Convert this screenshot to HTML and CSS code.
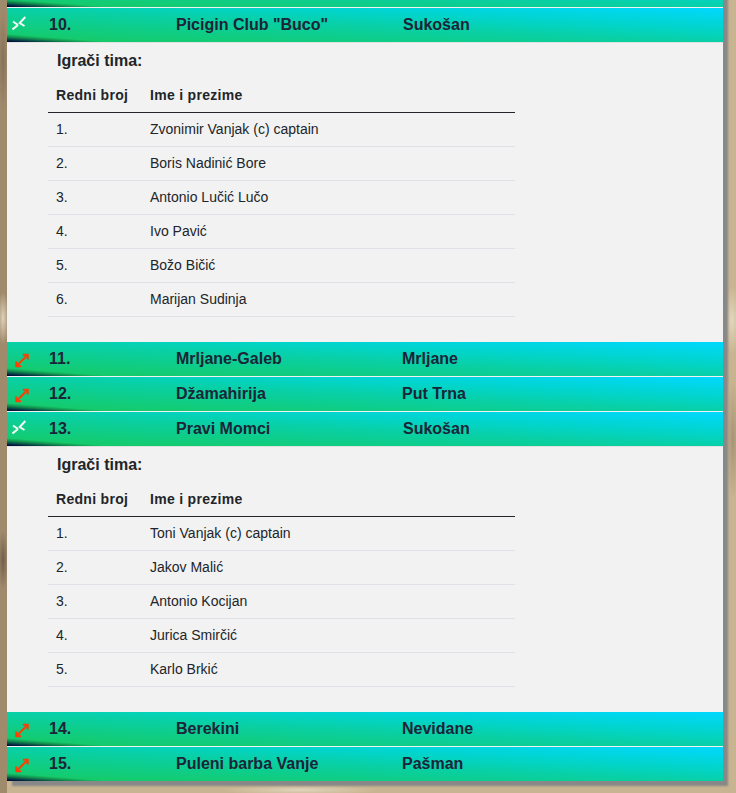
FILE: index.html
```html
<!DOCTYPE html>
<html lang="en">
<head>
    <meta charset="UTF-8">
    <meta name="viewport" content="width=device-width, initial-scale=1.0">
    <title>Timovi</title>
    <link rel="stylesheet" href="styles.css">
</head>
<body>
    <main class="teams">
        <div class="team-row">
            <span class="team-icon"></span>
        </div>

        <div class="team-row open">
            <span class="team-icon">
                <svg width="18" height="18" viewBox="0 0 18 18"><path d="M0.500 13.500 6 9M1 5.500 6 9M13.300 1 7.700 7 12.500 10" /></svg>
            </span>
            <span class="team-num">10.</span>
            <span class="team-name">Picigin Club "Buco"</span>
            <span class="team-place">Sukošan</span>
        </div>
        <section class="team-panel">
            <h3>Igrači tima:</h3>
            <table class="players">
                <thead>
                    <tr><th>Redni broj</th><th>Ime i prezime</th></tr>
                </thead>
                <tbody>
                    <tr><td>1.</td><td>Zvonimir Vanjak (c) captain</td></tr>
                    <tr><td>2.</td><td>Boris Nadinić Bore</td></tr>
                    <tr><td>3.</td><td>Antonio Lučić Lučo</td></tr>
                    <tr><td>4.</td><td>Ivo Pavić</td></tr>
                    <tr><td>5.</td><td>Božo Bičić</td></tr>
                    <tr><td>6.</td><td>Marijan Sudinja</td></tr>
                </tbody>
            </table>
        </section>

        <div class="team-row">
            <span class="team-icon">
                <svg width="18" height="18" viewBox="0 0 18 18"><path d="M4.300 16.300 15.700 4.700M4.300 11.500V16.300H9.100M10.900 4.700H15.700V9.500" /></svg>
            </span>
            <span class="team-num">11.</span>
            <span class="team-name">Mrljane-Galeb</span>
            <span class="team-place">Mrljane</span>
        </div>
        <div class="team-row">
            <span class="team-icon">
                <svg width="18" height="18" viewBox="0 0 18 18"><path d="M4.300 16.300 15.700 4.700M4.300 11.500V16.300H9.100M10.900 4.700H15.700V9.500" /></svg>
            </span>
            <span class="team-num">12.</span>
            <span class="team-name">Džamahirija</span>
            <span class="team-place">Put Trna</span>
        </div>

        <div class="team-row open">
            <span class="team-icon">
                <svg width="18" height="18" viewBox="0 0 18 18"><path d="M0.500 13.500 6 9M1 5.500 6 9M13.300 1 7.700 7 12.500 10" /></svg>
            </span>
            <span class="team-num">13.</span>
            <span class="team-name">Pravi Momci</span>
            <span class="team-place">Sukošan</span>
        </div>
        <section class="team-panel">
            <h3>Igrači tima:</h3>
            <table class="players">
                <thead>
                    <tr><th>Redni broj</th><th>Ime i prezime</th></tr>
                </thead>
                <tbody>
                    <tr><td>1.</td><td>Toni Vanjak (c) captain</td></tr>
                    <tr><td>2.</td><td>Jakov Malić</td></tr>
                    <tr><td>3.</td><td>Antonio Kocijan</td></tr>
                    <tr><td>4.</td><td>Jurica Smirčić</td></tr>
                    <tr><td>5.</td><td>Karlo Brkić</td></tr>
                </tbody>
            </table>
        </section>

        <div class="team-row">
            <span class="team-icon">
                <svg width="18" height="18" viewBox="0 0 18 18"><path d="M4.300 16.300 15.700 4.700M4.300 11.500V16.300H9.100M10.900 4.700H15.700V9.500" /></svg>
            </span>
            <span class="team-num">14.</span>
            <span class="team-name">Berekini</span>
            <span class="team-place">Nevidane</span>
        </div>
        <div class="team-row last">
            <span class="team-icon">
                <svg width="18" height="18" viewBox="0 0 18 18"><path d="M4.300 16.300 15.700 4.700M4.300 11.500V16.300H9.100M10.900 4.700H15.700V9.500" /></svg>
            </span>
            <span class="team-num">15.</span>
            <span class="team-name">Puleni barba Vanje</span>
            <span class="team-place">Pašman</span>
        </div>
    </main>
</body>
</html>
```

FILE: styles.css
```css
html, body {
    height: 793px;
    overflow: hidden;
}
body {
    margin: 0;
    padding: 0 13px 0 7px;
    box-sizing: border-box;
    font-family: "Liberation Sans", Arial, sans-serif;
    color: #212529;
    background-color: #c8b490;
    background-image:
        radial-gradient(ellipse 6px 26px at 3px 318px, #ddd2bc 0, transparent 100%),
        radial-gradient(ellipse 5px 30px at 3px 560px, #6f5f4c 0, transparent 100%),
        radial-gradient(ellipse 5px 50px at 3px 60px, #84715a 0, transparent 100%),
        radial-gradient(ellipse 9px 34px at 732px 320px, #e2d6bf 0, transparent 100%),
        radial-gradient(ellipse 7px 60px at 733px 440px, #a89476 0, transparent 100%),
        radial-gradient(ellipse 80px 5px at 300px 790px, #e0d4bc 0, transparent 100%),
        linear-gradient(90deg, #a08a6c 0 7px, #c8b490 7px);
}
.teams {
    margin-top: -27px;
    box-shadow: 5px 5px 2px #888;
}
.team-row {
    display: grid;
    grid-template-columns: 42px 127px 226px 1fr;
    align-items: center;
    height: 34px;
    border-bottom: 1px solid #f2f2f2;
    background:
        linear-gradient(4.5deg, #00003a 0, #042040 1.5px, #0a5a48 3.5px, #12944f 5.5px, rgba(24, 200, 96, 0) 8px),
        linear-gradient(to top right, #18c860 0%, #12cc78 17%, #08d0a8 50%, #02d4c8 67%, #00d8ff 100%);
    font-size: 16px;
    font-weight: bold;
    color: #1b2438;
}
.team-row.open {
    grid-template-columns: 42px 127px 227px 1fr;
}
.team-row.last {
    border-bottom: 0;
}
.team-icon {
    display: flex;
    padding-left: 5px;
}
.team-icon svg {
    fill: none;
    stroke: #ff3d00;
    stroke-width: 2;
}
.open .team-icon svg {
    stroke: #f4fbf6;
    stroke-width: 2;
}
.team-panel {
    padding: 9px 208px 25px 41px;
    background: #f2f2f2;
    border-top: 1px solid #e2e2e2;
    margin-top: -1px;
    position: relative;
}
.team-panel h3 {
    margin: 0 0 9px 9px;
    font-size: 16px;
    line-height: 18px;
    color: #212529;
}
.players {
    width: 100%;
    table-layout: fixed;
    border-collapse: collapse;
    font-size: 14px;
    line-height: 17px;
}
.players th, .players td {
    padding: 8px;
    text-align: left;
}
.players th:first-child, .players td:first-child {
    width: 78px;
}
.players th {
    border-bottom: 1px solid #212529;
    letter-spacing: 0.3px;
}
.players td {
    border-bottom: 1px solid #dee2e6;
}
```
